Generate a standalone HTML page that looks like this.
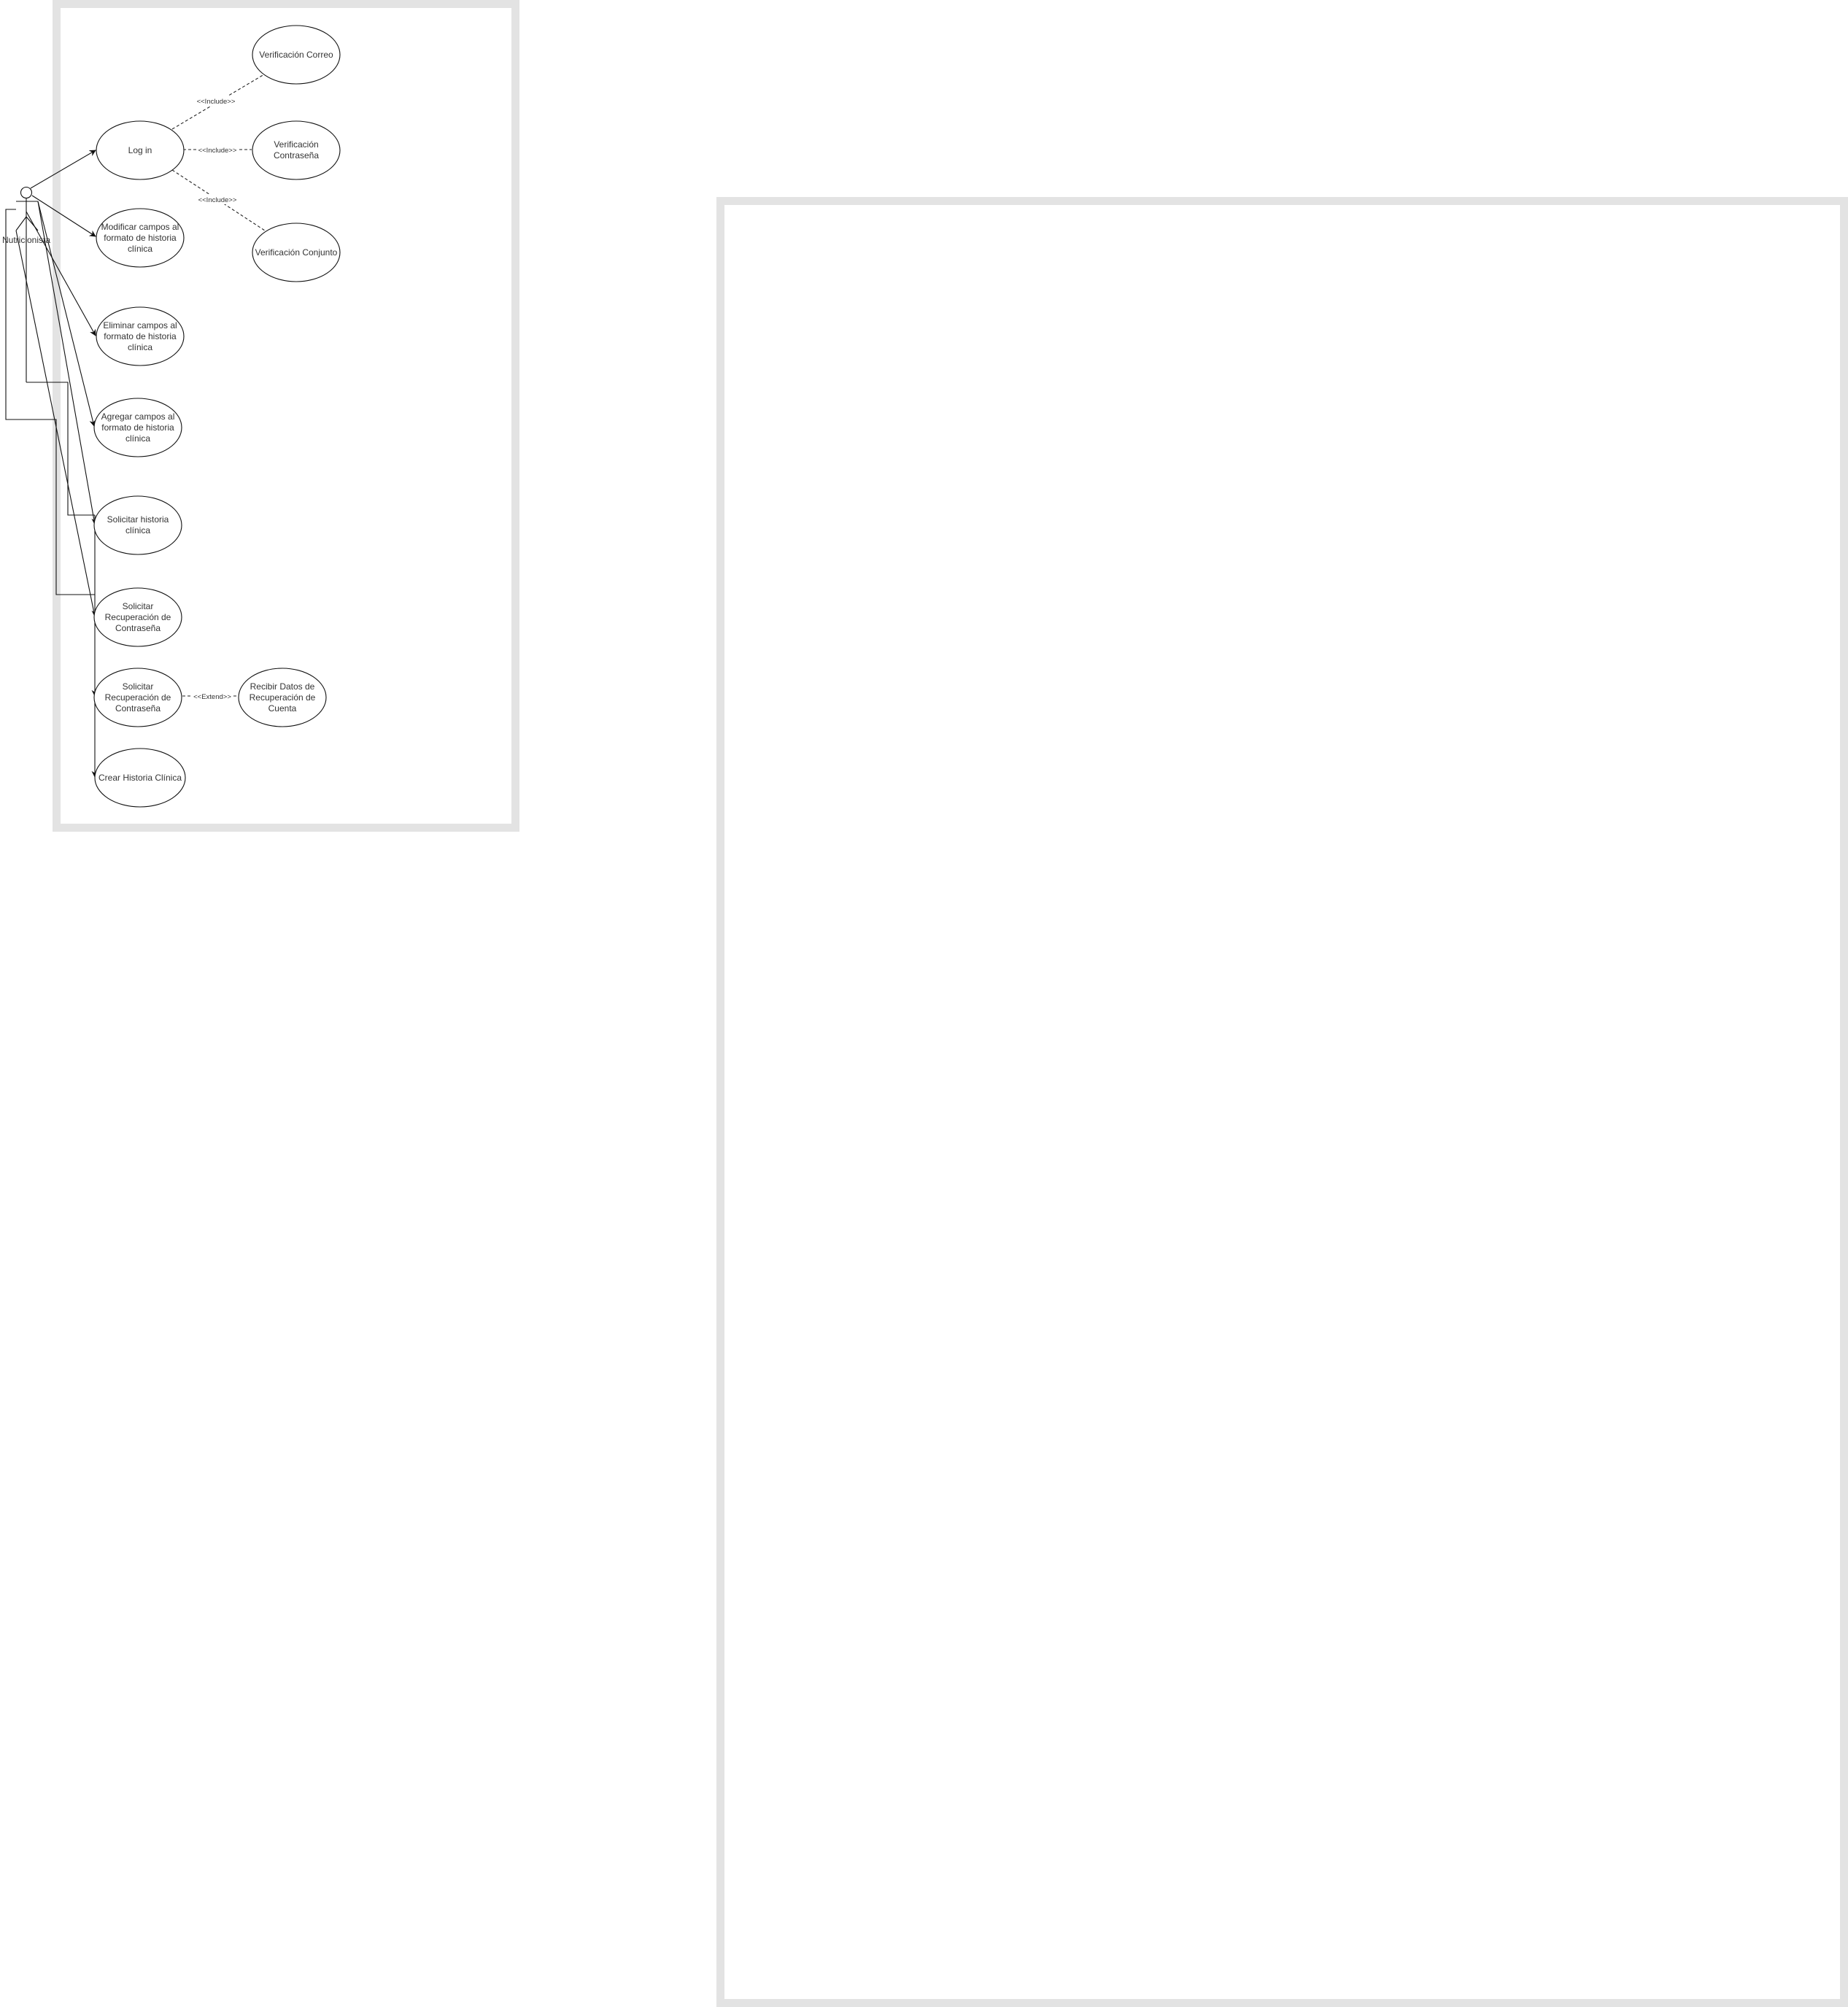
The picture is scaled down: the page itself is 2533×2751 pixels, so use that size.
<!DOCTYPE html>
<html><head><meta charset="utf-8"><style>
html,body{margin:0;padding:0;background:#fff;}
body{width:2533px;height:2751px;position:relative;overflow:hidden;}
svg{position:absolute;left:0;top:0;}
text{font-family:"Liberation Sans",sans-serif;fill:#333;}
</style></head><body>
<svg width="2533" height="2751" viewBox="0 0 2533 2751">
<defs>
<marker id="a" viewBox="0 0 10 10" refX="9" refY="5" markerWidth="9" markerHeight="9" orient="auto-start-reverse" markerUnits="userSpaceOnUse"><path d="M0,0 L10,5 L0,10 L3,5 z" fill="#111"/></marker>
</defs>
<rect x="77.5" y="5.5" width="629" height="1129" fill="#fff" stroke="#e3e3e3" stroke-width="11"/>
<rect x="987.5" y="275.5" width="1540" height="2470" fill="#fff" stroke="#e3e3e3" stroke-width="11"/>

<g fill="none" stroke="#111" stroke-width="1.1">
<circle cx="36" cy="264" r="7.5" fill="#fff"/>
<line x1="22" y1="276" x2="52" y2="276"/>
<line x1="36" y1="272" x2="36" y2="524"/>
<line x1="36" y1="297" x2="22" y2="316"/>
<line x1="36" y1="297" x2="52" y2="316"/>
<line x1="42" y1="258" x2="131" y2="206" marker-end="url(#a)"/>
<line x1="44" y1="268" x2="131" y2="324" marker-end="url(#a)"/>
<line x1="36" y1="290" x2="131" y2="460" marker-end="url(#a)"/>
<line x1="52" y1="276" x2="129" y2="584" marker-end="url(#a)"/>
<line x1="52" y1="276" x2="130" y2="719" />
<line x1="22" y1="316" x2="130" y2="845" />
<path d="M22 287 H8 V575 H77 V815 H130"/>
<path d="M36 524 H93 V706 H130"/>
<line x1="130" y1="706" x2="130" y2="719" marker-end="url(#a)"/>
<line x1="130" y1="719" x2="130" y2="845" marker-end="url(#a)"/>
<line x1="130" y1="845" x2="130" y2="954" marker-end="url(#a)"/>
<line x1="130" y1="954" x2="130" y2="1065" marker-end="url(#a)"/>
</g>
<g fill="none" stroke="#222" stroke-width="1.1" stroke-dasharray="4,3">
<line x1="236" y1="177" x2="362" y2="102"/>
<line x1="251" y1="205" x2="345" y2="205"/>
<line x1="236" y1="233" x2="363" y2="316"/>
<line x1="250" y1="954" x2="327" y2="954"/>
</g>
<g font-size="9.5" text-anchor="middle">
<rect x="268" y="131" width="56" height="14" fill="#fff"/><text x="296" y="142">&lt;&lt;Include&gt;&gt;</text>
<rect x="270" y="198" width="56" height="14" fill="#fff"/><text x="298" y="209">&lt;&lt;Include&gt;&gt;</text>
<rect x="270" y="266" width="56" height="14" fill="#fff"/><text x="298" y="277">&lt;&lt;Include&gt;&gt;</text>
<rect x="264" y="947" width="54" height="14" fill="#fff"/><text x="291" y="958">&lt;&lt;Extend&gt;&gt;</text>
</g>
<g fill="#fff" stroke="#111" stroke-width="1.1">
<ellipse cx="406" cy="75" rx="60" ry="40"/>
<ellipse cx="192" cy="206" rx="60" ry="40"/>
<ellipse cx="406" cy="206" rx="60" ry="40"/>
<ellipse cx="406" cy="346" rx="60" ry="40"/>
<ellipse cx="192" cy="326" rx="60" ry="40"/>
<ellipse cx="192" cy="461" rx="60" ry="40"/>
<ellipse cx="189" cy="586" rx="60" ry="40"/>
<ellipse cx="189" cy="720" rx="60" ry="40"/>
<ellipse cx="189" cy="846" rx="60" ry="40"/>
<ellipse cx="189" cy="956" rx="60" ry="40"/>
<ellipse cx="387" cy="956" rx="60" ry="40"/>
<ellipse cx="192" cy="1066" rx="62" ry="40"/>
</g>
<g font-size="12" text-anchor="middle">
<text x="406" y="79">Verificación Correo</text>
<text x="192" y="210">Log in</text>
<text x="406" y="202">Verificación</text><text x="406" y="217">Contraseña</text>
<text x="406" y="350">Verificación Conjunto</text>
<text x="192" y="315">Modificar campos al</text><text x="192" y="330">formato de historia</text><text x="192" y="345">clínica</text>
<text x="192" y="450">Eliminar campos al</text><text x="192" y="465">formato de historia</text><text x="192" y="480">clínica</text>
<text x="189" y="575">Agregar campos al</text><text x="189" y="590">formato de historia</text><text x="189" y="605">clínica</text>
<text x="189" y="716">Solicitar historia</text><text x="189" y="731">clínica</text>
<text x="189" y="835">Solicitar</text><text x="189" y="850">Recuperación de</text><text x="189" y="865">Contraseña</text>
<text x="189" y="945">Solicitar</text><text x="189" y="960">Recuperación de</text><text x="189" y="975">Contraseña</text>
<text x="387" y="945">Recibir Datos de</text><text x="387" y="960">Recuperación de</text><text x="387" y="975">Cuenta</text>
<text x="192" y="1070">Crear Historia Clínica</text>
<text x="36" y="333">Nutricionista</text>
</g>
</svg>
</body></html>
